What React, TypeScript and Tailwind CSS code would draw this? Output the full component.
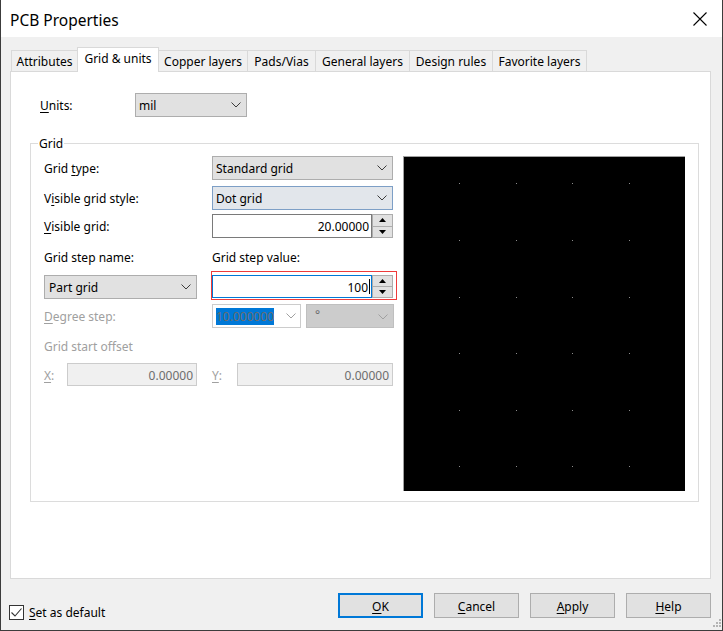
import clsx from "clsx";

const tabs = [
  { label: "Attributes", w: "w-[67px]" },
  { label: "Grid & units", w: "w-[82px]", active: true },
  { label: "Copper layers", w: "w-[90px]" },
  { label: "Pads/Vias", w: "w-[69px]" },
  { label: "General layers", w: "w-[95px]" },
  { label: "Design rules", w: "w-[84px]" },
  { label: "Favorite layers", w: "w-[95px]" },
];

const dotsX = [55, 112, 168, 225];
const dotsY = [26, 83, 140, 196, 253, 309];

function Chevron({ color = "#3c3c3c" }: { color?: string }) {
  return (
    <svg width="10" height="6" viewBox="0 0 10 6" className="shrink-0">
      <path d="M0.5 0.5 L5 5 L9.5 0.5" fill="none" stroke={color} strokeWidth="1" />
    </svg>
  );
}

function Combo({ text, className }: { text: string; className: string }) {
  return (
    <div className={clsx("flex h-[24px] shrink-0 items-center justify-between border pl-[3px] pr-[5px] pt-[2px]", className)}>
      <span>{text}</span>
      <span className="-mt-[2px]">
        <Chevron />
      </span>
    </div>
  );
}

function Spin() {
  return (
    <div className="flex h-full w-[21px] shrink-0 flex-col border border-[#adadad] bg-[#e1e1e1]">
      <div className="flex flex-1 items-center justify-center border-b border-[#adadad]">
        <svg width="7" height="4" viewBox="0 0 7 4">
          <path d="M3.5 0 L7 4 L0 4 Z" fill="#000" />
        </svg>
      </div>
      <div className="flex flex-1 items-center justify-center">
        <svg width="7" height="4" viewBox="0 0 7 4">
          <path d="M0 0 L7 0 L3.5 4 Z" fill="#000" />
        </svg>
      </div>
    </div>
  );
}

function Button({ k, rest, primary }: { k: string; rest: string; primary?: boolean }) {
  return (
    <div
      className={clsx(
        "flex h-[25px] w-[85px] items-center justify-center bg-[#e1e1e1] pt-[2px]",
        primary ? "border-2 border-[#0078d7]" : "border border-[#adadad]"
      )}
    >
      <span>
        <span className="underline underline-offset-2">{k}</span>
        {rest}
      </span>
    </div>
  );
}

export default function App() {
  return (
    <div className="relative flex h-[631px] w-[723px] flex-col border-x border-b border-[#3c3c3c] bg-[#f0f0f0] font-['Noto_Sans',sans-serif] text-[12px] leading-[16px] text-black">
      {/* title bar */}
      <div className="flex h-[37px] shrink-0 items-center justify-between bg-white pl-[9px] pr-[15px]">
        <span className="pt-[2px] text-[15.5px] leading-[20px]">PCB Properties</span>
        <svg width="14" height="14" viewBox="0 0 14 14">
          <path d="M0.5 0.5 L13.5 13.5 M13.5 0.5 L0.5 13.5" stroke="#000" strokeWidth="1.1" />
        </svg>
      </div>

      <div className="ml-[9px] mt-[10px] w-[701px]">
        {/* tabs */}
        <div className="flex h-[24px] items-end pl-px">
          {tabs.map((t, i) => (
            <div
              key={t.label}
              className={clsx(
                "flex items-center justify-center border-x border-t border-[#d9d9d9]",
                t.w,
                i > 0 && "-ml-px",
                t.active
                  ? "relative z-10 -mb-px h-[25px] bg-white pb-[2px]"
                  : "h-[21px] bg-[#f0f0f0] pt-[2px]"
              )}
            >
              {t.label}
            </div>
          ))}
        </div>

        {/* panel */}
        <div className="h-[508px] border border-[#d9d9d9] bg-white">
          <div className="ml-[29px] mt-[21px] flex h-[24px] items-center">
            <span className="w-[95px] pt-[2px]">
              <span className="underline underline-offset-2">U</span>nits:
            </span>
            <Combo text="mil" className="w-[112px] border-[#adadad] bg-[#e1e1e1]" />
          </div>

          {/* grid group */}
          <div className="relative ml-[19px] mt-[26px] h-[359px] w-[669px] border border-[#dcdcdc] pl-[13px] pt-[12px]">
            <span className="absolute -top-[8px] left-[7px] bg-white px-px">Grid</span>
            <div className="flex">
              <div className="w-[350px] shrink-0">
                <div className="flex h-[24px] items-center">
                  <span className="w-[168px] shrink-0 pt-[2px]">
                    Grid <span className="underline underline-offset-2">t</span>ype:
                  </span>
                  <Combo text="Standard grid" className="w-[181px] border-[#adadad] bg-[#e1e1e1]" />
                </div>
                <div className="mt-[6px] flex h-[24px] items-center">
                  <span className="w-[168px] shrink-0 pt-[2px]">
                    V<span className="underline underline-offset-2">i</span>sible grid style:
                  </span>
                  <Combo text="Dot grid" className="w-[181px] border-[#7d9fc6] bg-[#e2e6eb]" />
                </div>
                <div className="mt-[4px] flex h-[24px] items-center">
                  <span className="w-[168px] shrink-0 pt-[2px]">
                    <span className="underline underline-offset-2">V</span>isible grid:
                  </span>
                  <div className="flex h-full w-[181px] shrink-0">
                    <div className="flex flex-1 items-center justify-end border border-[#7a7a7a] bg-white pr-[2px] pt-[2px]">
                      20.00000
                    </div>
                    <Spin />
                  </div>
                </div>

                <div className="mt-[12px] flex">
                  <span className="w-[168px] shrink-0">Grid step name:</span>
                  <span>Grid step value:</span>
                </div>

                <div className="mt-[9px] flex h-[23px] items-center">
                  <Combo text="Part grid" className="h-[23px] w-[153px] border-[#adadad] bg-[#e1e1e1] pl-[4px]" />
                  <div className="relative z-10 -mb-[2px] -mt-[4px] ml-[14px] shrink-0 border border-[#ee3b3b] pb-px pr-[3px] pt-[3px]">
                    <div className="flex h-[23px] w-[181px]">
                      <div className="flex flex-1 items-center justify-end border border-[#0078d7] bg-white pr-px pt-[2px]">
                        100
                        <span className="-mt-[2px] ml-px h-[15px] w-px bg-black" />
                      </div>
                      <Spin />
                    </div>
                  </div>
                </div>

                <div className="mt-[6px] flex h-[24px] items-center">
                  <span className="w-[168px] shrink-0 pt-[2px] text-[#a0a0a0]">
                    <span className="underline underline-offset-2">D</span>egree step:
                  </span>
                  <div className="flex h-full w-[89px] shrink-0 items-center justify-between border border-[#cccccc] bg-white pl-[3px] pr-[4px]">
                    <span className="shrink-0 bg-[#0078d7] pt-px text-[#6d6d6d]">10.000000</span>
                    <Chevron color="#a0a0a0" />
                  </div>
                  <div className="ml-[5px] flex h-full w-[88px] shrink-0 items-start justify-between border border-[#bfbfbf] bg-[#cccccc] pl-[8px] pr-[5px] pt-[2px] text-[#6d6d6d]">
                    <span>°</span>
                    <span className="mt-[7px]">
                      <Chevron color="#a0a0a0" />
                    </span>
                  </div>
                </div>

                <div className="mt-[11px] text-[#a0a0a0]">Grid start offset</div>

                <div className="mt-[8px] flex h-[23px] items-center text-[#a0a0a0]">
                  <span className="w-[23px] shrink-0 pt-[2px]">
                    <span className="underline underline-offset-2">X</span>:
                  </span>
                  <div className="flex h-full w-[130px] shrink-0 items-center justify-end border border-[#cccccc] bg-[#f0f0f0] pr-[3px] pt-[2px] text-[#6d6d6d]">
                    0.00000
                  </div>
                  <span className="ml-[15px] w-[25px] shrink-0 pt-[2px]">
                    <span className="underline underline-offset-2">Y</span>:
                  </span>
                  <div className="flex h-full w-[156px] shrink-0 items-center justify-end border border-[#cccccc] bg-[#f0f0f0] pr-[3px] pt-[2px] text-[#6d6d6d]">
                    0.00000
                  </div>
                </div>
              </div>

              {/* preview */}
              <div className="ml-[9px] h-[335px] w-[282px] shrink-0 border-l border-t border-[#a0a0a0] bg-black">
                <svg width="281" height="334" className="block">
                  {dotsY.map((y) =>
                    dotsX.map((x) => <rect key={`${x}-${y}`} x={x} y={y} width="1" height="1" fill="#8c8c8c" />)
                  )}
                </svg>
              </div>
            </div>
          </div>
        </div>
      </div>

      {/* bottom bar */}
      <div className="mt-[14px] flex items-start">
        <div className="ml-[8px] mt-[10px] flex items-center">
          <div className="flex h-[15px] w-[15px] items-center justify-center border border-[#333] bg-white">
            <svg width="11" height="9" viewBox="0 0 11 9">
              <path d="M0.5 4.5 L4 8 L10.5 0.5" fill="none" stroke="#333" strokeWidth="1.1" />
            </svg>
          </div>
          <span className="ml-[5px] pt-[2px]">
            <span className="underline underline-offset-2">S</span>et as default
          </span>
        </div>
        <div className="ml-auto mr-[11px] flex gap-[11px]">
          <Button k="O" rest="K" primary />
          <Button k="C" rest="ancel" />
          <Button k="A" rest="pply" />
          <Button k="H" rest="elp" />
        </div>
      </div>
      <svg width="10" height="10" viewBox="0 0 10 10" className="absolute left-[710px] top-[619px]">
        {[
          [8, 0],
          [5, 3],
          [8, 3],
          [2, 6],
          [5, 6],
          [8, 6],
        ].map(([x, y]) => (
          <rect key={`${x}${y}`} x={x} y={y} width="2" height="2" fill="#b4b4b4" />
        ))}
      </svg>
    </div>
  );
}
